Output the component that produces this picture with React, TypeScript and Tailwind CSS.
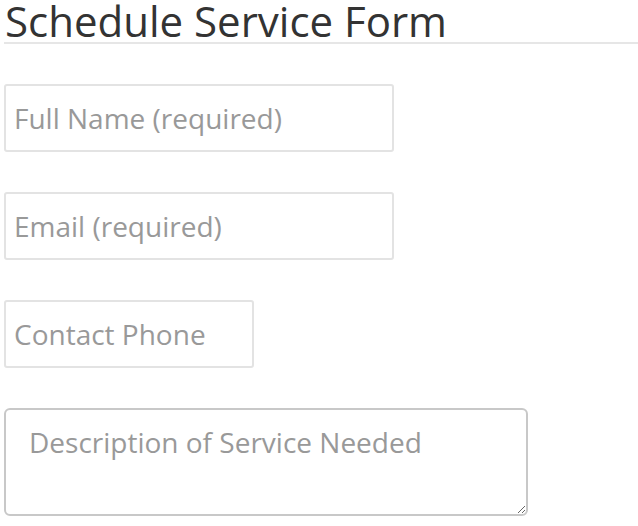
export default function App() {
  return (
    <div className="w-[638px] h-[526px] bg-white pl-[4px] overflow-hidden" style={{ fontFamily: '"Open Sans", sans-serif' }}>
      <div className="border-b-2 border-[#e6e6e6] h-[44px] pl-[1px]">
        <h1 className="text-[42px] leading-[42px] text-[#333] font-normal whitespace-nowrap">
          Schedule Service Form
        </h1>
      </div>
      <div className="flex flex-col items-start mt-[40px] gap-[40px]">
        <input
          className="w-[390px] h-[68px] border-2 border-[#e3e3e3] rounded-[3px] pl-[8px] text-[28px] text-[#555] placeholder:text-[#999] outline-none"
          placeholder="Full Name (required)"
        />
        <input
          className="w-[390px] h-[68px] border-2 border-[#e3e3e3] rounded-[3px] pl-[8px] text-[28px] text-[#555] placeholder:text-[#999] outline-none"
          placeholder="Email (required)"
        />
        <input
          className="w-[250px] h-[68px] border-2 border-[#e3e3e3] rounded-[3px] pl-[8px] text-[28px] text-[#555] placeholder:text-[#999] outline-none"
          placeholder="Contact Phone"
        />
        <textarea
          className="w-[524px] h-[108px] border-2 border-[#c8c8c8] rounded-[6px] pl-[23px] pt-[14px] text-[28px] leading-[36px] text-[#555] placeholder:text-[#999] outline-none"
          placeholder="Description of Service Needed"
        />
      </div>
    </div>
  );
}
